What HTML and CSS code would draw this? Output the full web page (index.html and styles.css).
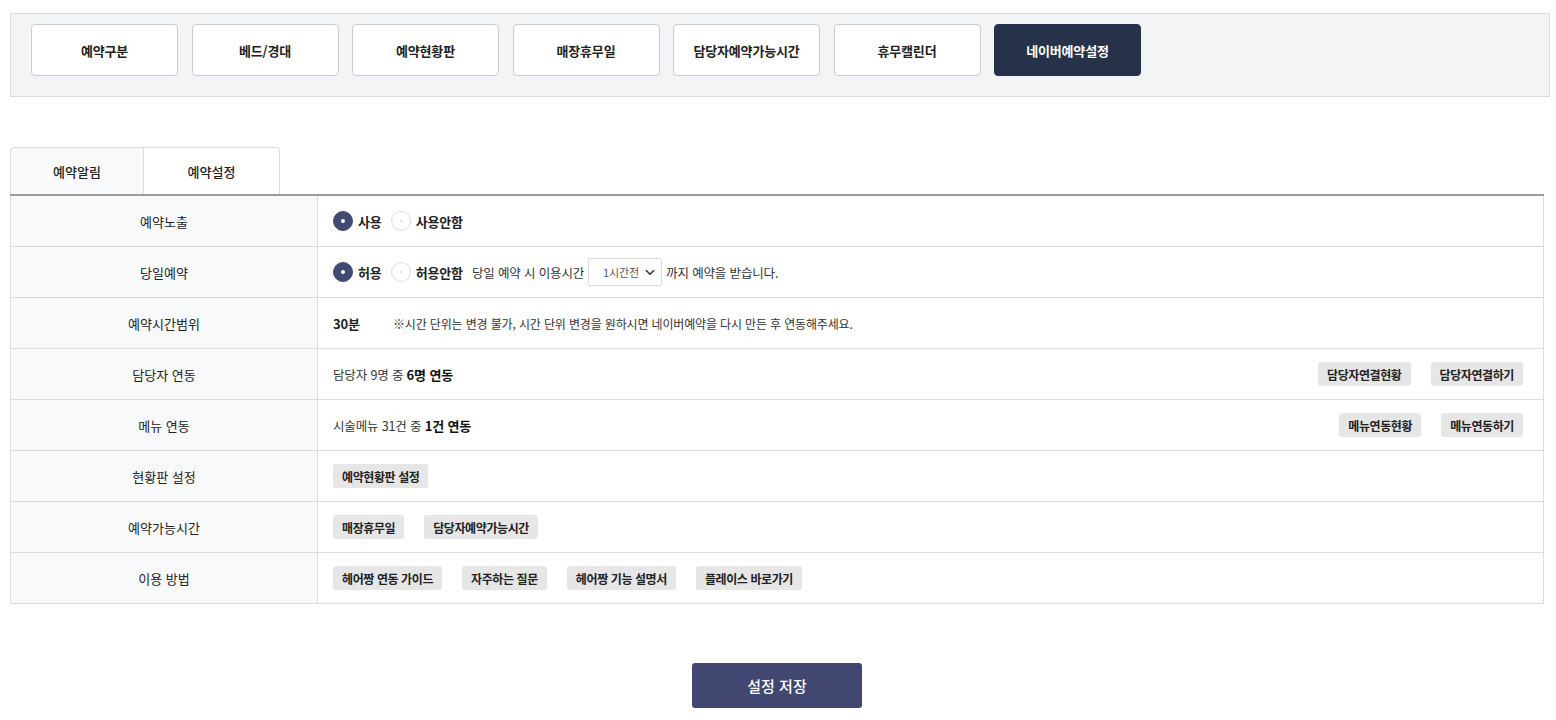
FILE: index.html
```html
<!DOCTYPE html>
<html lang="ko">
<head>
<meta charset="utf-8">
<link rel="stylesheet" href="styles.css">
</head>
<body>
<div class="page">
  <nav class="topbar">
    <button class="topbtn">예약구분</button>
    <button class="topbtn">베드/경대</button>
    <button class="topbtn">예약현황판</button>
    <button class="topbtn">매장휴무일</button>
    <button class="topbtn">담당자예약가능시간</button>
    <button class="topbtn">휴무캘린더</button>
    <button class="topbtn active">네이버예약설정</button>
  </nav>

  <div class="content">
    <div class="tabs">
      <div class="tab">예약알림</div>
      <div class="tab on">예약설정</div>
    </div>

    <div class="table">
      <div class="row">
        <div class="th">예약노출</div>
        <div class="td">
          <span class="radio checked"></span><span class="rlabel">사용</span>
          <span class="radio"></span><span class="rlabel">사용안함</span>
        </div>
      </div>
      <div class="row">
        <div class="th">당일예약</div>
        <div class="td">
          <span class="radio checked"></span><span class="rlabel">허용</span>
          <span class="radio"></span><span class="rlabel">허용안함</span>
          <span class="txt">당일 예약 시 이용시간</span>
          <span class="select">1시간전<svg width="10" height="7" viewBox="0 0 10 7"><path d="M1 1.2 L5 5.2 L9 1.2" fill="none" stroke="#333" stroke-width="1.6"/></svg></span>
          <span class="txt">까지 예약을 받습니다.</span>
        </div>
      </div>
      <div class="row">
        <div class="th">예약시간범위</div>
        <div class="td">
          <b class="strong">30분</b>
          <span class="notice">※시간 단위는 변경 불가, 시간 단위 변경을 원하시면 네이버예약을 다시 만든 후 연동해주세요.</span>
        </div>
      </div>
      <div class="row">
        <div class="th">담당자 연동</div>
        <div class="td">
          <span class="txt">담당자 9명 중 <b>6명 연동</b></span>
          <div class="right">
            <button class="gbtn">담당자연결현황</button>
            <button class="gbtn">담당자연결하기</button>
          </div>
        </div>
      </div>
      <div class="row">
        <div class="th">메뉴 연동</div>
        <div class="td">
          <span class="txt">시술메뉴 31건 중 <b>1건 연동</b></span>
          <div class="right">
            <button class="gbtn">메뉴연동현황</button>
            <button class="gbtn">메뉴연동하기</button>
          </div>
        </div>
      </div>
      <div class="row">
        <div class="th">현황판 설정</div>
        <div class="td">
          <button class="gbtn">예약현황판 설정</button>
        </div>
      </div>
      <div class="row">
        <div class="th">예약가능시간</div>
        <div class="td btns">
          <button class="gbtn">매장휴무일</button>
          <button class="gbtn">담당자예약가능시간</button>
        </div>
      </div>
      <div class="row">
        <div class="th">이용 방법</div>
        <div class="td btns">
          <button class="gbtn">헤어짱 연동 가이드</button>
          <button class="gbtn">자주하는 질문</button>
          <button class="gbtn">헤어짱 기능 설명서</button>
          <button class="gbtn">플레이스 바로가기</button>
        </div>
      </div>
    </div>

    <div class="savewrap">
      <button class="save">설정 저장</button>
    </div>
  </div>
</div>
</body>
</html>
```

FILE: styles.css
```css
* { box-sizing: border-box; }
body {
  margin: 0;
  background: #fff;
  font-family: "Noto Sans CJK KR", "Noto Sans", sans-serif;
  color: #222;
}
.page { padding: 13px 6px 0 10px; }

.topbar {
  display: flex;
  gap: 13.5px;
  height: 84px;
  padding: 10px 20px 0 20px;
  background: #f3f4f6;
  border: 1px solid #dcdcdc;
}
.topbtn {
  width: 147px;
  height: 52px;
  background: #fff;
  border: 1px solid #c9ccd3;
  border-radius: 4px;
  font-family: inherit;
  font-size: 13px;
  font-weight: 700;
  color: #222;
  padding: 0;
  letter-spacing: -0.2px;
}
.topbtn.active {
  background: #253249;
  border-color: #253249;
  color: #fff;
}

.content { width: 1534px; }

.tabs {
  display: flex;
  margin-top: 50px;
  border-bottom: 2px solid #9c9c9c;
}
.tab {
  width: 134px;
  height: 47px;
  display: flex;
  align-items: center;
  justify-content: center;
  font-size: 13px;
  font-weight: 500;
  color: #222;
  background: #f8f9fb;
  border: 1px solid #dcdcdc;
  border-bottom: none;
  border-radius: 4px 0 0 0;
}
.tab.on {
  width: 136px;
  background: #fff;
  border-left: none;
  border-radius: 0 4px 0 0;
}

.table {
  border-left: 1px solid #dcdcdc;
  border-right: 1px solid #dcdcdc;
}
.row {
  display: flex;
  height: 51px;
  border-bottom: 1px solid #dcdcdc;
}
.th {
  width: 307px;
  flex: none;
  background: #f8f9fb;
  border-right: 1px solid #dcdcdc;
  display: flex;
  align-items: center;
  justify-content: center;
  font-size: 13px;
  color: #222;
}
.td {
  flex: 1;
  display: flex;
  align-items: center;
  padding: 0 20px 0 15px;
  font-size: 13px;
  letter-spacing: -0.15px;
}
.radio {
  width: 20px;
  height: 20px;
  border-radius: 50%;
  border: 1px solid #dcdcdc;
  background: #fff;
  position: relative;
  flex: none;
}
.radio::after {
  content: "";
  position: absolute;
  left: 8px;
  top: 8px;
  width: 2px;
  height: 2px;
  border-radius: 50%;
  background: #d6d6d6;
}
.radio.checked {
  background: #434a72;
  border-color: #434a72;
}
.radio.checked::after {
  left: 7px;
  top: 7px;
  width: 4px;
  height: 4px;
  background: #fff;
}
.rlabel {
  font-weight: 700;
  margin: 0 9px 0 5px;
  color: #222;
}
.txt { color: #333; font-size: 12.5px; }
.txt b { font-weight: 700; color: #111; font-size: 13px; }
.select {
  display: inline-flex;
  align-items: center;
  justify-content: space-between;
  width: 74px;
  height: 28px;
  margin: 0 4px 0 4px;
  padding: 0 6px 0 14px;
  border: 1px solid #dcdcdc;
  border-radius: 2px;
  font-size: 11px;
  color: #555;
}
.strong { font-weight: 700; width: 60px; }
.notice { font-size: 12px; color: #333; }
.right {
  margin-left: auto;
  display: flex;
  gap: 20px;
}
.btns { gap: 20px; }
.gbtn {
  height: 24px;
  padding: 0 9px;
  background: #e6e6e6;
  border: none;
  border-radius: 3px;
  font-family: inherit;
  font-size: 12px;
  font-weight: 700;
  color: #222;
  letter-spacing: -0.4px;
}

.savewrap {
  display: flex;
  justify-content: center;
  padding-top: 59px;
}
.save {
  width: 170px;
  height: 45px;
  background: #414770;
  border: none;
  border-radius: 3px;
  color: #fff;
  font-family: inherit;
  font-size: 15px;
  font-weight: 500;
}
```
